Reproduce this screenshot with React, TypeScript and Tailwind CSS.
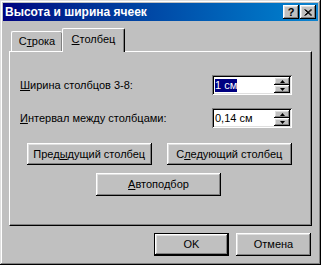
const raised =
  "shadow-[inset_-1px_-1px_#000,inset_1px_1px_#fff,inset_-2px_-2px_#808080,inset_2px_2px_#dfdfdf]";
const sunken =
  "shadow-[inset_1px_1px_#808080,inset_-1px_-1px_#fff,inset_2px_2px_#000,inset_-2px_-2px_#dfdfdf]";

function Btn({ children, className = "" }: { children: React.ReactNode; className?: string }) {
  return (
    <button className={`h-[22px] bg-[#c0c0c0] ${raised} text-[11px] text-black flex items-center justify-center ${className}`}>
      {children}
    </button>
  );
}

function Spin() {
  return (
    <div className="flex flex-col w-[16px] h-[16px]">
      {[0, 1].map((i) => (
        <div key={i} className={`h-[8px] bg-[#c0c0c0] ${raised} flex items-center justify-center`}>
          <svg width="5" height="3" viewBox="0 0 5 3">
            {i === 0 ? <path d="M2.5 0 L5 3 L0 3 Z" fill="#000" /> : <path d="M0 0 L5 0 L2.5 3 Z" fill="#000" />}
          </svg>
        </div>
      ))}
    </div>
  );
}

function Field({ value, selected }: { value: string; selected?: boolean }) {
  return (
    <div className={`w-[80px] h-[20px] bg-white ${sunken} flex items-center justify-between pl-[3px] pr-[2px]`}>
      <span className={`text-[11px] leading-[13px] px-[0px] ${selected ? "bg-[#000080] text-white" : "text-black"}`}>{value}</span>
      <Spin />
    </div>
  );
}

export default function App() {
  return (
    <div
      className={`w-[321px] h-[265px] bg-[#c0c0c0] p-[3px] font-['Liberation_Sans',Arial,sans-serif] shadow-[inset_-1px_-1px_#000,inset_1px_1px_#dfdfdf,inset_-2px_-2px_#808080,inset_2px_2px_#fff]`}
    >
      {/* title bar */}
      <div className="h-[18px] flex items-center justify-between bg-gradient-to-r from-[#000080] to-[#1084d0] pl-[2px] pr-[2px]">
        <span className="text-white font-bold text-[12px] leading-none">Высота и ширина ячеек</span>
        <div className="flex gap-[1px]">
          <button className={`w-[16px] h-[14px] bg-[#c0c0c0] ${raised} flex items-center justify-center text-[11px] font-bold leading-none text-black`}>
            ?
          </button>
          <button className={`w-[16px] h-[14px] bg-[#c0c0c0] ${raised} flex items-center justify-center`}>
            <svg width="8" height="7" viewBox="0 0 8 7">
              <path d="M0.5 0.5 L7 6.5 M1.5 0.5 L8 6.5 M7 0.5 L0.5 6.5 M8 0.5 L1.5 6.5" stroke="#000" strokeWidth="1" />
            </svg>
          </button>
        </div>
      </div>

      <div className="px-[6px] pt-[7px]">
        {/* tabs */}
        <div className="flex items-end h-[23px] pl-[2px] text-[11px] text-black">
          <div className="w-[51px] h-[20px] border-l border-t border-white rounded-tl-[2px] rounded-tr-[2px] shadow-[inset_-1px_0_#808080] flex items-center justify-center pb-[1px]">
            <span>
              С<u>т</u>рока
            </span>
          </div>
          <div className="relative z-10 w-[63px] h-[24px] -mb-[1px] bg-[#c0c0c0] border-l border-t border-white border-r border-r-black rounded-tl-[2px] rounded-tr-[2px] shadow-[inset_-1px_0_#808080] flex items-center justify-center pb-[2px]">
            <span>
              <u>С</u>толбец
            </span>
          </div>
        </div>

        {/* panel */}
        <div className="h-[175px] border-l border-t border-white border-r border-b border-r-black border-b-black shadow-[inset_-1px_-1px_#808080] pt-[23px] pl-[10px] pr-[19px] text-[11px] text-black">
          <div className="flex items-center justify-between">
            <span>
              <u>Ш</u>ирина столбцов 3-8:
            </span>
            <Field value="1 см" selected />
          </div>
          <div className="flex items-center justify-between mt-[13px]">
            <span>
              <u>И</u>нтервал между столбцами:
            </span>
            <Field value="0,14 см" />
          </div>
          <div className="flex gap-[15px] mt-[15px] pl-[7px]">
            <Btn className="w-[125px]">
              Пред<u>ы</u>дущий столбец
            </Btn>
            <Btn className="w-[126px]">
              С<u>л</u>едующий столбец
            </Btn>
          </div>
          <div className="mt-[8px] pl-[76px]">
            <Btn className="w-[125px] h-[23px]">
              <u>А</u>втоподбор
            </Btn>
          </div>
        </div>

        {/* footer */}
        <div className="flex justify-end gap-[7px] mt-[7px] pr-[1px]">
          <button className="w-[75px] h-[23px] border border-black bg-[#c0c0c0] shadow-[inset_-1px_-1px_#000,inset_1px_1px_#fff,inset_-2px_-2px_#808080,inset_2px_2px_#dfdfdf] text-[11px] text-black">
            OK
          </button>
          <Btn className="w-[75px] h-[23px]">Отмена</Btn>
        </div>
      </div>
    </div>
  );
}
